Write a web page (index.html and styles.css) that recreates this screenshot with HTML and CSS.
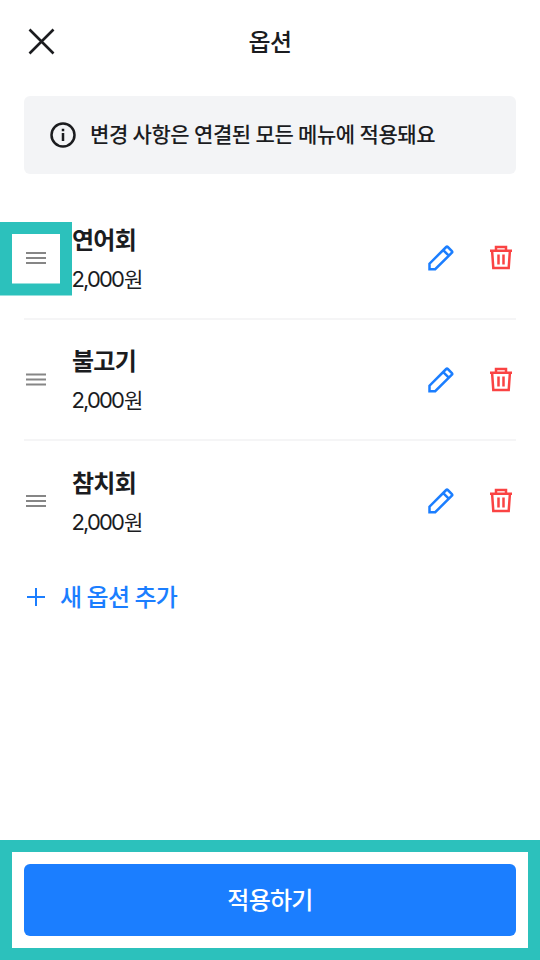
FILE: index.html
```html
<!DOCTYPE html>
<html lang="ko">
<head>
<meta charset="utf-8">
<title>옵션</title>
<link rel="stylesheet" href="styles.css">
</head>
<body>
<svg class="defs" width="0" height="0">
  <symbol id="handle" viewBox="0 0 20 12"><path d="M0 1H20M0 6H20M0 11H20" fill="none" stroke="#868686" stroke-width="2"/></symbol>
  <symbol id="handle-half" viewBox="0 0 20 13"><path d="M0 1.5H20M0 6.5H20M0 11.5H20" fill="none" stroke="#868686" stroke-width="2"/></symbol>
  <symbol id="edit" viewBox="0 0 28 28"><path d="M2.5 25.2V19.7L19.2 3Q20 2.2 20.8 3L24.9 7.1Q25.7 7.9 24.9 8.7L8.2 25.2ZM16.2 6.1L21.8 11.7" fill="none" stroke="#1b7eff" stroke-width="2.5"/></symbol>
  <symbol id="trash" viewBox="0 0 24 26"><path d="M1 5.7H23M7 5.5V1.9H17V5.5M3.1 6L4.3 22.9H19.7L20.9 6M9.5 9.5V19.5M14.5 9.5V19.5" fill="none" stroke="#fa4343" stroke-width="2.5"/></symbol>
</svg>
<div class="screen">
  <header class="header">
    <svg class="close" viewBox="0 0 27 27"><path d="M1.5 1.5L25.5 25.5M25.5 1.5L1.5 25.5" fill="none" stroke="#1b1c1f" stroke-width="2.6"/></svg>
    <h1 class="title">옵션</h1>
  </header>
  <div class="notice">
    <svg class="info" viewBox="0 0 26 26"><circle cx="13" cy="13" r="11.5" fill="none" stroke="#1b1c1f" stroke-width="2.5"/><path d="M13 11V19M13 6.8V9.3" fill="none" stroke="#1b1c1f" stroke-width="2.5"/></svg>
    <p class="notice-text">변경 사항은 연결된 모든 메뉴에 적용돼요</p>
  </div>
  <ul class="list">
    <li class="row">
      <span class="grip marked"><svg class="handle"><use href="#handle"/></svg></span>
      <div class="info-col"><strong class="name">연어회</strong><span class="price"><span class="num">2,000</span>원</span></div>
      <svg class="edit"><use href="#edit"/></svg><svg class="trash"><use href="#trash"/></svg>
    </li>
    <li class="row short">
      <span class="grip"><svg class="handle half"><use href="#handle-half"/></svg></span>
      <div class="info-col"><strong class="name">불고기</strong><span class="price"><span class="num">2,000</span>원</span></div>
      <svg class="edit"><use href="#edit"/></svg><svg class="trash"><use href="#trash"/></svg>
    </li>
    <li class="row">
      <span class="grip"><svg class="handle"><use href="#handle"/></svg></span>
      <div class="info-col"><strong class="name">참치회</strong><span class="price"><span class="num">2,000</span>원</span></div>
      <svg class="edit"><use href="#edit"/></svg><svg class="trash"><use href="#trash"/></svg>
    </li>
  </ul>
  <button class="add"><svg class="plus" viewBox="0 0 18 18"><path d="M9 0V18M0 9H18" stroke="#1b7eff" stroke-width="2"/></svg><span class="add-text">새 옵션 추가</span></button>
  <footer class="footer"><button class="apply">적용하기</button></footer>
</div>
</body>
</html>
```

FILE: styles.css
```css
* { box-sizing: border-box; margin: 0; padding: 0; }
body {
  background: #fff;
  color: #1b1c1f;
  font-family: "Noto Sans CJK KR", sans-serif;
}
button { border: 0; background: none; font: inherit; }
svg { display: block; flex: none; }
.defs { position: absolute; }
.screen { display: flex; flex-direction: column; width: 540px; height: 960px; }
.header { display: grid; grid-template-columns: 72px 1fr 72px; align-items: center; height: 84px; }
.close { width: 27px; height: 27px; margin: 0 0 1px 28px; }
.title { padding-bottom: 2px; font-size: 24px; line-height: 36px; font-weight: 500; letter-spacing: -0.02em; text-align: center; }
.notice {
  display: flex; align-items: center; gap: 14px;
  height: 78px; margin: 12px 24px 24px; padding-left: 26px;
  border-radius: 6px; background: #f3f4f6;
}
.info { width: 26px; height: 26px; }
.notice-text { padding-bottom: 4px; font-size: 21px; line-height: 32px; font-weight: 500; letter-spacing: -0.02em; word-spacing: -0.7px; }
.list { list-style: none; margin: 0 24px; }
.row { display: flex; align-items: center; height: 122px; border-bottom: 2px solid #f5f5f6; }
.row.short { height: 121px; }
.row:last-child { border-bottom-color: transparent; }
.grip {
  display: flex; align-items: center; justify-content: center;
  width: 72px; height: 73px; margin-left: -24px;
}
.marked {
  margin-top: 1px; padding-bottom: 2px;
  border: 12px solid #2cc1bc; border-bottom-width: 11px;
  box-shadow: 0 1px 0 #95e0dd, inset 0 -1px 0 #95e0dd;
}
.handle { width: 20px; height: 12px; }
.half { height: 13px; }
.info-col { display: flex; flex-direction: column; flex: 1; gap: 5px; }
.name { font-size: 24px; line-height: 36px; font-weight: 700; letter-spacing: -0.03em; }
.price { font-size: 21px; line-height: 33px; font-weight: 400; letter-spacing: -0.03em; }
.num { font-family: Inter, sans-serif; font-size: 22px; font-weight: 400; letter-spacing: -0.085em; margin: 0 1px 0 -0.5px; }
.edit { width: 28px; height: 28px; margin-right: 34px; }
.trash { width: 24px; height: 26px; margin-right: 3px; }
.add {
  display: flex; align-items: center; gap: 15px; height: 36px;
  margin: 16px 0 0 27px;
  color: #1b7eff; font-size: 24px; line-height: 36px; font-weight: 500;
}
.add-text { padding-bottom: 2px; letter-spacing: -0.03em; word-spacing: -0.8px; }
.plus { width: 18px; height: 18px; }
.footer { height: 120px; margin-top: auto; padding: 12px; border: 12px solid #2cc1bc; }
.apply {
  display: block; width: 100%; height: 72px; padding-bottom: 3px; border-radius: 6px;
  background: #1b7eff; color: #fff; font-size: 24px; font-weight: 500; letter-spacing: -0.03em;
}
```
